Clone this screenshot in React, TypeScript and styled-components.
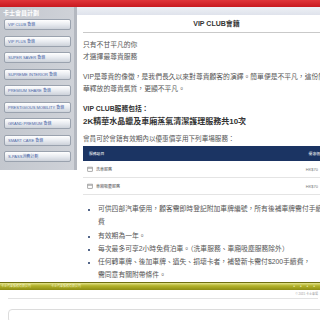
import styled, {createGlobalStyle} from 'styled-components';

const GlobalStyle = createGlobalStyle`
    html, body {
        margin: 0;
        padding: 0;
        overflow: hidden;
        background: #fff;
    }
    body {
        font-family: "Liberation Sans", "Noto Sans CJK TC", sans-serif;
    }
`;

const sideItems = [
    'VIP CLUB 會籍',
    'VIP PLUS 會籍',
    'SUPER SAVER 會籍',
    'SUPREME INTERIOR 會籍',
    'PREMIUM SHARE 會籍',
    'PRESTIGIOUS MOBILITY 會籍',
    'GRAND PREMIUM 會籍',
    'SMART CARE 會籍',
    'S-PASS消費計劃',
];

const services = [
    {name: '洗車服務', price: 'HK$70'},
    {name: '車廂吸塵服務', price: 'HK$70'},
];

// each term is split into its display lines
const terms = [
    ['可供四部汽車使用，顧客需即時登記附加車牌編號，所有後補車牌需付手續', '費'],
    ['有效期為一年。'],
    ['每次最多可享2小時免費泊車。（洗車服務、車廂吸塵服務除外）'],
    ['任何轉車牌、後加車牌、遺失、損壞卡者，補發新卡需付$200手續費，', '需同意有關附帶條件。'],
];

/**
 * VIP CLUB page
 */
const App = () => {
    return <Page>
        <GlobalStyle/>
        <TopBar/>
        <Body>
            <Sidebar>
                <SideTitle>卡士會員計劃</SideTitle>
                <SideList>
                    {sideItems.map(item => <SideButton key={item}>{item}</SideButton>)}
                </SideList>
            </Sidebar>

            <Main>
                <MainBand/>
                <Content>
                    <Title>VIP CLUB會籍</Title>

                    <Para>只有不甘平凡的你<br/>才選擇最尊貴服務</Para>
                    <Para>VIP是尊貴的像徵，是我們長久以來對尊貴顧客的演繹。簡單便是不平凡，這份簡單卻隱藏着低調奢<br/>
                        華釋放的尊貴氣質，更顯不平凡。</Para>

                    <SubHead>VIP CLUB服務包括：</SubHead>
                    <Highlight>2K精華水晶蠟及車廂蒸氣清潔護理服務共10次</Highlight>

                    <TableNote>會員可於會籍有效期內以優惠價享用下列車場服務：</TableNote>
                    <Table>
                        <HeadRow>
                            <span>服務項目</span>
                            <span>優惠價</span>
                        </HeadRow>
                        {services.map(s => <Row key={s.name}>
                            <RowName>
                                <RowIcon viewBox="0 0 8 8">
                                    <rect x="1" y="1.5" width="6" height="5.5" fill="none" stroke="#777" strokeWidth="0.8"/>
                                    <line x1="1" y1="3" x2="7" y2="3" stroke="#777" strokeWidth="0.8"/>
                                </RowIcon>
                                {s.name}
                            </RowName>
                            <Price>{s.price}</Price>
                        </Row>)}
                    </Table>

                    <Terms>
                        {terms.map(t => <li key={t[0]}>
                            {t.map((line, i) => <span key={line}>{i > 0 && <br/>}{line}</span>)}
                        </li>)}
                    </Terms>
                </Content>
            </Main>
        </Body>

        <FooterBand>
            <FootLinks>
                <span>卡士汽車服務有限公司</span>
                <span>卡士汽車服務有限公司</span>
            </FootLinks>
            <FootDots>● ● ● ●</FootDots>
        </FooterBand>
        <Copyright>© 2015 卡士車場</Copyright>
        <BottomBox/>
    </Page>;
};

export default App;


const Page = styled.div`
    width: 340px;
    min-height: 320px;
    background: #fff;
`;

const TopBar = styled.div`
    height: 7px;
    background: linear-gradient(#e0353a, #c8191f);
`;

const Body = styled.div`
    display: flex;
    align-items: stretch;
`;

const Sidebar = styled.div`
    width: 77px;
    flex: none;
    align-self: flex-start;
    height: 163px;
    box-sizing: border-box;
    background: linear-gradient(90deg, #c3c7ce, #cfd2d8);
    border-right: 3px solid #b4b8c0;
    padding: 2px 0 0 0;
`;

const SideTitle = styled.div`
    color: #fff;
    font-weight: bold;
    font-size: 6px;
    line-height: 9px;
    padding-left: 3px;
`;

const SideList = styled.div`
    display: flex;
    flex-direction: column;
    gap: 5.5px;
    padding: 1px 0 0 4px;
`;

const SideButton = styled.div`
    height: 11px;
    width: 67px;
    box-sizing: border-box;
    border: 1px solid #9aa2ae;
    border-radius: 2px;
    background: linear-gradient(#ffffff, #e8ebf0 50%, #cdd2da);
    color: #4b66a6;
    font-size: 4px;
    line-height: 9px;
    padding-left: 3px;
    white-space: nowrap;
    overflow: hidden;
`;

const Main = styled.div`
    flex: 1;
    min-width: 0;
`;

const MainBand = styled.div`
    height: 8px;
    background: linear-gradient(#eef0f5, #dfe3ec);
`;

const Content = styled.div`
    padding: 0 0 0 6px;
`;

const Title = styled.div`
    text-align: center;
    font-weight: bold;
    font-size: 7px;
    line-height: 16px;
    padding-top: 1px;
    color: #333;
    border-bottom: 1px solid #c9c9c9;
    padding-left: 10px;
`;

const Para = styled.p`
    margin: 6px 0 0;
    font-size: 6.8px;
    line-height: 12px;
    color: #555;
    white-space: nowrap;
    & + & {
        margin-top: 8px;
    }
`;

const SubHead = styled.div`
    margin-top: 8px;
    font-size: 6.8px;
    font-weight: bold;
    line-height: 12px;
    color: #333;
`;

const Highlight = styled.div`
    font-size: 8px;
    font-weight: bold;
    line-height: 13px;
    color: #333;
`;

const TableNote = styled.div`
    margin-top: 5px;
    font-size: 6.6px;
    line-height: 12px;
    color: #555;
`;

const Table = styled.div`
    margin-top: 1px;
`;

const HeadRow = styled.div`
    display: flex;
    justify-content: space-between;
    height: 15px;
    align-items: center;
    background: #1b3463;
    color: #fff;
    font-size: 3.8px;
    padding: 0 20px 0 6px;
`;

const Row = styled.div`
    display: flex;
    justify-content: space-between;
    align-items: center;
    height: 16px;
    border-bottom: 1px solid #e4e4e4;
    padding: 0 22px 0 4px;
    font-size: 4px;
    color: #555;
`;

const RowName = styled.div`
    display: flex;
    align-items: center;
    gap: 3px;
`;

const RowIcon = styled.svg`
    width: 6px;
    height: 6px;
`;

const Price = styled.span`
    color: #777;
`;

const Terms = styled.ul`
    margin: 7px 0 0;
    padding-left: 15px;
    font-size: 6.8px;
    line-height: 13.3px;
    color: #555;
    white-space: nowrap;
    li::marker {
        color: #1b3463;
        font-size: 6px;
    }
`;

const FooterBand = styled.div`
    margin-top: 0;
    height: 8px;
    display: flex;
    justify-content: space-between;
    align-items: center;
    width: 320px;
    box-sizing: border-box;
    padding: 0 3px 0 1px;
    background: linear-gradient(#e4e48c, #b3b32c 40%, #8d8d14);
    border-top: 1px solid #6f6f10;
`;

const FootLinks = styled.div`
    display: flex;
    gap: 20px;
    font-size: 3px;
    color: #f0f0c8;
`;

const FootDots = styled.div`
    font-size: 3px;
    letter-spacing: 2px;
    color: #f4f4c0;
`;

const Copyright = styled.div`
    text-align: right;
    font-size: 3px;
    line-height: 8px;
    color: #999;
    border-bottom: 1px solid #e2e2e2;
    margin-left: 8px;
    width: 310px;
`;

const BottomBox = styled.div`
    margin: 10px 0 0 8px;
    height: 12px;
    width: 330px;
    border: 1px solid #dcdcdc;
    border-radius: 4px;
`;
